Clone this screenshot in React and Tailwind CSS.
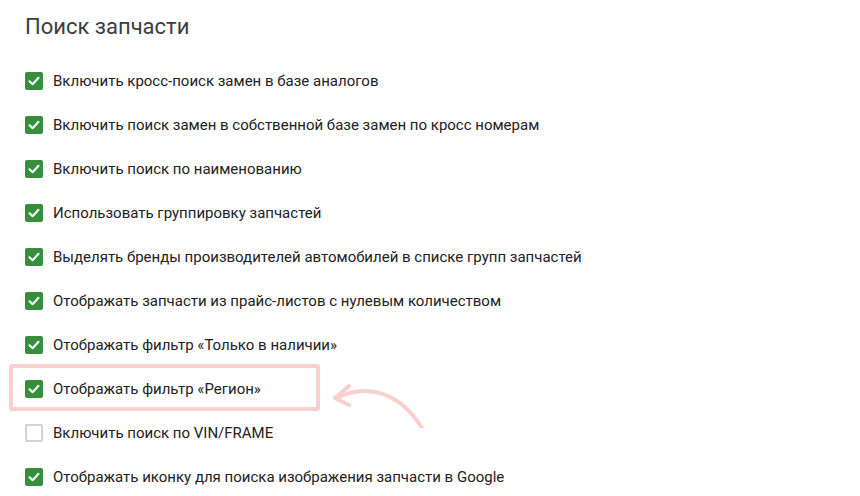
import React from "react";

const options = [
  { label: "Включить кросс-поиск замен в базе аналогов", checked: true },
  { label: "Включить поиск замен в собственной базе замен по кросс номерам", checked: true },
  { label: "Включить поиск по наименованию", checked: true },
  { label: "Использовать группировку запчастей", checked: true },
  { label: "Выделять бренды производителей автомобилей в списке групп запчастей", checked: true },
  { label: "Отображать запчасти из прайс-листов с нулевым количеством", checked: true },
  { label: "Отображать фильтр «Только в наличии»", checked: true },
  { label: "Отображать фильтр «Регион»", checked: true, highlight: true },
  { label: "Включить поиск по VIN/FRAME", checked: false },
  { label: "Отображать иконку для поиска изображения запчасти в Google", checked: true },
];

const Checkbox = ({ checked }) =>
  checked ? (
    <span className="flex h-[18px] w-[18px] shrink-0 items-center justify-center rounded-[2px] bg-[#388e3c]">
      <svg width="12" height="10" viewBox="0 0 12 10" fill="none">
        <path
          d="M1.5 5.2L4.6 8.2L10.5 1.8"
          stroke="white"
          strokeWidth="2"
          strokeLinecap="round"
          strokeLinejoin="round"
        />
      </svg>
    </span>
  ) : (
    <span className="h-[18px] w-[18px] shrink-0 rounded-[2px] border-2 border-[#d4d4d4] bg-white" />
  );

const App = () => {
  return (
    <div className="relative h-[496px] w-[860px] overflow-hidden bg-white pl-[25px] font-['Roboto','Liberation_Sans',sans-serif]">
      <h1 className="pt-[11px] text-[22px] leading-[32px] font-normal text-[#3d3d3d]">
        Поиск запчасти
      </h1>
      <ul className="mt-[16px] flex flex-col">
        {options.map(({ label, checked, highlight }) => (
          <li key={label} className="relative flex h-[44px] items-center gap-[10px]">
            {highlight && (
              <>
                <span className="pointer-events-none absolute top-[-3px] left-[-16px] h-[47px] w-[311px] rounded-[3px] border-4 border-[#f9d0d0]" />
                <svg
                  className="pointer-events-none absolute top-[5px] left-[303px]"
                  width="110"
                  height="56"
                  viewBox="328 360 110 56"
                  fill="none"
                >
                  <path
                    d="M337 386 C 360 374, 396 374, 422 416"
                    stroke="#f9d0d0"
                    strokeWidth="4"
                    strokeLinecap="round"
                  />
                  <path
                    d="M349 374 L335 386 L349 393"
                    stroke="#f9d0d0"
                    strokeWidth="4"
                    strokeLinecap="round"
                    strokeLinejoin="round"
                  />
                </svg>
              </>
            )}
            <Checkbox checked={checked} />
            <span className="relative text-[15px] text-[#222]">{label}</span>
          </li>
        ))}
      </ul>
    </div>
  );
};

export default App;
